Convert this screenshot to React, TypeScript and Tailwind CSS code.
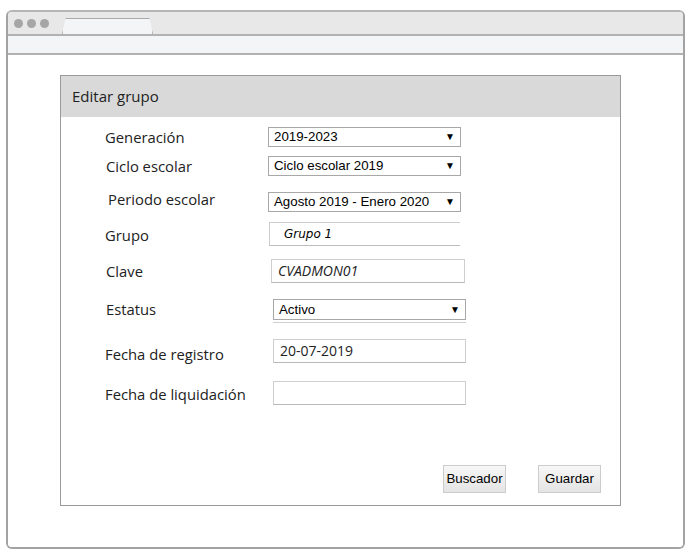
import React from "react";

const labelFont = "font-['Open_Sans',sans-serif] text-[14.8px] leading-[18px] text-[#222]";
const fieldFont = "font-['Liberation_Sans',Arial,sans-serif] text-[13.3px] text-black";

const Select = ({ value, className = "" }: { value: string; className?: string }) => (
  <div
    className={`flex items-center justify-between border border-[#a8a8a8] bg-white pl-[5px] pr-[5px] leading-none ${fieldFont} ${className}`}
  >
    <span>{value}</span>
    <span className="text-[10px] leading-none">▼</span>
  </div>
);

const Input = ({ value, italic, className = "" }: { value?: string; italic?: boolean; className?: string }) => (
  <div
    className={`flex items-center border border-[#cfcfcf] border-b-[#b9b9b9] bg-white pl-[6px] font-['Open_Sans',sans-serif] text-[14px] leading-none text-[#222] ${
      italic ? "italic" : ""
    } ${className}`}
  >
    {value}
  </div>
);

const Row = ({
  label,
  labelLeft,
  labelShift = 0,
  className = "",
  children,
}: {
  label: string;
  labelLeft: string;
  labelShift?: number;
  className?: string;
  children: React.ReactNode;
}) => (
  <div className={`flex items-center ${className}`}>
    <div className={`${labelLeft} shrink-0 ${labelFont}`} style={{ transform: `translateY(${labelShift}px)` }}>
      {label}
    </div>
    {children}
  </div>
);

export default function App() {
  return (
    <div className="w-[690px] h-[560px] bg-white pt-[10px] pl-[6px]">
      {/* browser frame */}
      <div className="w-[679px] h-[539px] rounded-t-[6px] rounded-b-[6px] border-2 border-[#a3a3a3] border-t-[#b5b5b5] flex flex-col overflow-hidden">
        <div className="h-[22px] bg-[#e8e8e8] flex items-end pl-[6px] relative">
          <div className="flex gap-[4px] self-center">
            <span className="w-[9px] h-[9px] rounded-full bg-[#a6a6a6]" />
            <span className="w-[9px] h-[9px] rounded-full bg-[#a6a6a6]" />
            <span className="w-[9px] h-[9px] rounded-full bg-[#a6a6a6]" />
          </div>
          <div className="ml-[13px] w-[91px] h-[16px] bg-[#f4f5f7] border border-b-0 border-[#a9a9a9] [clip-path:polygon(0_100%,4%_0,96%_0,100%_100%)] rounded-t-[2px]" />
        </div>
        <div className="h-[21px] bg-[#f4f5f7] border-t-2 border-b-2 border-[#b2b2b2]" />
        <div className="flex-1 bg-white pl-[52px] pt-[20px]">
          {/* panel */}
          <div className="w-[561px] h-[431px] border border-[#9a9a9a] flex flex-col">
            <div className="h-[41px] bg-[#d9d9d9] flex items-center pl-[11px] font-['Open_Sans',sans-serif] text-[15px] text-[#222]">
              Editar grupo
            </div>
            <div className="flex flex-col">
              <Row label="Generación" labelLeft="w-[207px] pl-[44px]" className="mt-[10px]">
                <Select value="2019-2023" className="w-[193px] h-[20px]" />
              </Row>
              <Row label="Ciclo escolar" labelLeft="w-[207px] pl-[45px]" className="mt-[9px]">
                <Select value="Ciclo escolar 2019" className="w-[193px] h-[20px]" />
              </Row>
              <Row label="Periodo escolar" labelLeft="w-[207px] pl-[47px]" labelShift={-3} className="mt-[16px]">
                <Select value="Agosto 2019 - Enero 2020" className="w-[193px] h-[20px]" />
              </Row>
              <Row label="Grupo" labelLeft="w-[208px] pl-[44px]" labelShift={1} className="mt-[10px]">
                <div className="w-[191px] h-[24px] border-t border-l border-b border-[#cdcdcd] border-b-[#bdbdbd] flex items-center pl-[14px] italic font-['DejaVu_Sans',sans-serif] text-[12px] leading-none text-black">
                  Grupo 1
                </div>
              </Row>
              <Row label="Clave" labelLeft="w-[210px] pl-[45px]" className="mt-[13px]">
                <Input value="CVADMON01" italic className="w-[194px] h-[24px]" />
              </Row>
              <div className="mt-[16px] flex">
                <div className={`w-[212px] pl-[45px] shrink-0 ${labelFont} pt-[1px]`}>Estatus</div>
                <div className="flex flex-col">
                  <Select value="Activo" className="w-[193px] h-[21px] border-[#9c9c9c]" />
                  <div className="mt-[2px] w-[193px] h-[1px] bg-[#cfcfcf]" />
                </div>
              </div>
              <Row label="Fecha de registro" labelLeft="w-[212px] pl-[44px]" labelShift={3} className="mt-[16px]">
                <Input value="20-07-2019" className="w-[193px] h-[24px]" />
              </Row>
              <Row label="Fecha de liquidación" labelLeft="w-[212px] pl-[44px]" labelShift={1} className="mt-[18px]">
                <Input className="w-[193px] h-[24px]" />
              </Row>
              <div className="mt-[60px] flex pl-[382px] gap-[32px]">
                <button className={`w-[63px] h-[28px] border border-[#cccccc] bg-gradient-to-b from-[#f7f7f7] to-[#e4e4e4] ${fieldFont}`}>
                  Buscador
                </button>
                <button className={`w-[63px] h-[28px] border border-[#cccccc] bg-gradient-to-b from-[#f7f7f7] to-[#e4e4e4] ${fieldFont}`}>
                  Guardar
                </button>
              </div>
            </div>
          </div>
        </div>
      </div>
    </div>
  );
}
